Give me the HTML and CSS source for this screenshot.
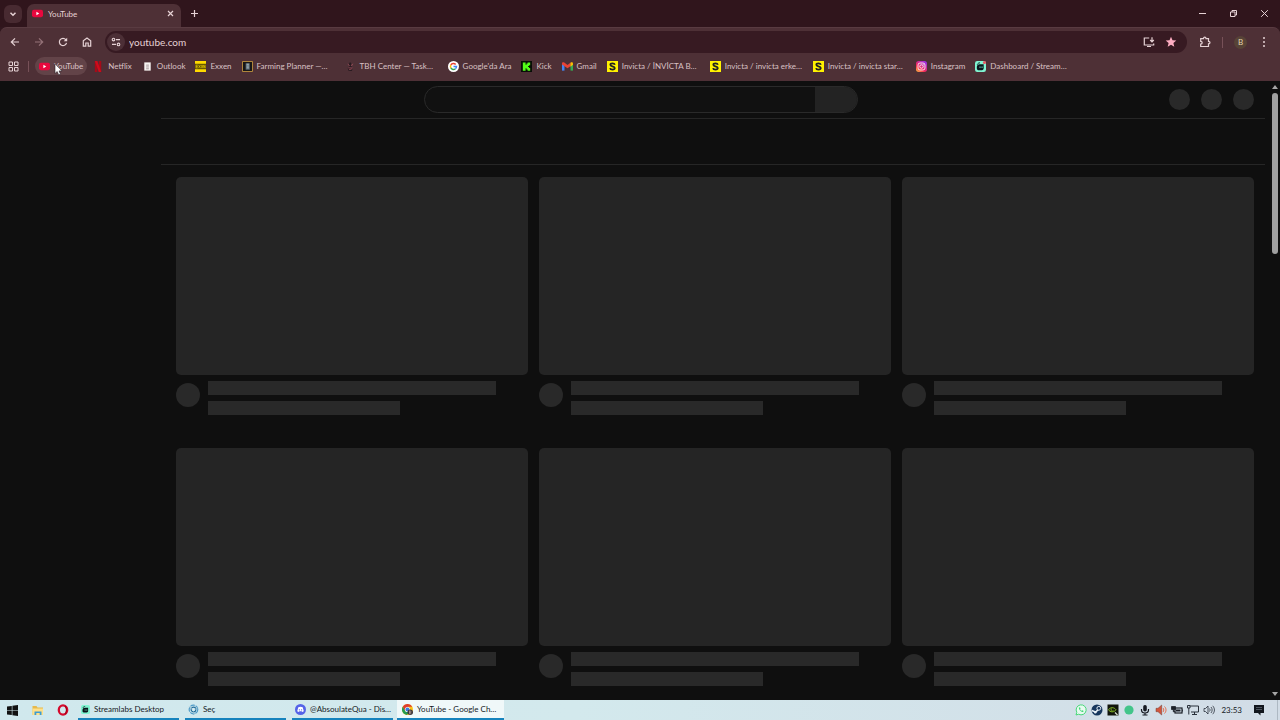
FILE: index.html
```html
<!DOCTYPE html>
<html lang="tr">
<head>
    <meta charset="UTF-8">
    <meta name="viewport" content="width=device-width, initial-scale=1.0">
    <title>YouTube</title>
    <link rel="stylesheet" href="styles.css">
</head>
<body>
    <!-- Shared icons -->
    <svg class="defs" aria-hidden="true">
        <symbol id="yt" viewBox="0 0 12 12">
            <rect x="0" y="2" width="12" height="8" rx="2" fill="#e8083e"/>
            <path d="M4.8 4.2v3.6L7.9 6z" fill="#fff"/>
        </symbol>
        <symbol id="sahibinden" viewBox="0 0 12 12">
            <rect width="12" height="12" fill="#fff200"/>
            <path d="M8.600 4C8.300 2.900 7.300 2.600 6 2.600 4.600 2.600 3.600 3.200 3.600 4.200 3.600 6.300 8.500 5.300 8.500 7.700 8.500 8.900 7.400 9.400 6 9.400 4.500 9.400 3.500 8.900 3.300 7.700" fill="none" stroke="#222" stroke-width="1.900"/>
        </symbol>
        <symbol id="streamlabs" viewBox="0 0 12 12">
            <rect width="12" height="12" rx="2.500" fill="#80f5d2"/>
            <path d="M2 6.500C2 4.500 3.500 3.500 5 3.500h4.500V8c0 1-.7 2-2 2H3.500C2.500 10 2 9 2 8z" fill="#09161d"/>
            <path d="M2.500 4C3 2.500 4 2 5.500 2" fill="none" stroke="#09161d"/>
            <path d="M5.500 6v1.500M7.700 6v1.500" stroke="#80f5d2"/>
        </symbol>
    </svg>

    <header class="browser">
        <div class="tab-strip">
            <button class="tab-search" aria-label="Search tabs">
                <svg width="8" height="8" viewBox="0 0 8 8"><path d="M1.500 2.800 4 5.300l2.500-2.500" fill="none" stroke="currentColor" stroke-width="1.500"/></svg>
            </button>
            <div class="tab">
                <svg width="11" height="11"><use href="#yt"/></svg>
                <span class="tab-title">YouTube</span>
                <button class="tab-close" aria-label="Close tab">
                    <svg width="7" height="7" viewBox="0 0 7 7"><path d="M1 1l5 5M6 1 1 6" stroke="currentColor" stroke-width="1.200"/></svg>
                </button>
            </div>
            <button class="new-tab" aria-label="New tab">
                <svg width="9" height="9" viewBox="0 0 9 9"><path d="M4.500 1v7M1 4.500h7" stroke="currentColor" stroke-width="1.200"/></svg>
            </button>
            <div class="window-controls">
                <button aria-label="Minimize"><svg width="9" height="9" viewBox="0 0 9 9"><path d="M1 4.500h7" stroke="currentColor"/></svg></button>
                <button aria-label="Restore"><svg width="9" height="9" viewBox="0 0 9 9"><path d="M1.500 3h4.500v4.500H1.500zM3 3V1.500h4.500V6H6" fill="none" stroke="currentColor"/></svg></button>
                <button aria-label="Close"><svg width="9" height="9" viewBox="0 0 9 9"><path d="M1.200 1.200l6.600 6.600M7.800 1.200 1.200 7.800" stroke="currentColor"/></svg></button>
            </div>
        </div>

        <div class="toolbar">
            <nav class="nav-buttons">
                <button aria-label="Back"><svg width="12" height="12" viewBox="0 0 12 12"><path d="M10 6H2.500M6 2.300 2.300 6 6 9.700" fill="none" stroke="currentColor" stroke-width="1.200"/></svg></button>
                <button aria-label="Forward" disabled><svg width="12" height="12" viewBox="0 0 12 12"><path d="M2 6h7.500M6 2.300 9.700 6 6 9.700" fill="none" stroke="currentColor" stroke-width="1.200"/></svg></button>
                <button aria-label="Reload"><svg width="12" height="12" viewBox="0 0 12 12"><path d="M9.500 6.800A3.600 3.600 0 1 1 8.800 3.700L9.800 4.700" fill="none" stroke="currentColor" stroke-width="1.200"/><path d="M10.200 1.800v3.500H6.700z" fill="currentColor"/></svg></button>
                <button aria-label="Home"><svg width="12" height="12" viewBox="0 0 12 12"><path d="M2.300 10.200V4.700L6 1.900l3.700 2.800v5.500H7.200V7H4.800v3.200z" fill="none" stroke="currentColor" stroke-width="1.200"/></svg></button>
            </nav>
            <form class="omnibox">
                <button type="button" class="site-info" aria-label="Site information">
                    <svg width="10" height="10" viewBox="0 0 10 10"><g fill="none" stroke="currentColor" stroke-width="1.100"><circle cx="2.500" cy="2.600" r="1.300"/><path d="M5 2.600h4M1 7.400h4"/><circle cx="7.500" cy="7.400" r="1.300"/></g></svg>
                </button>
                <input type="text" class="address" aria-label="Address" value="youtube.com">
                <button type="button" class="omni-action" aria-label="Install app"><svg width="12" height="12" viewBox="0 0 12 12"><path d="M6.200 2H1.300v7h9.400V7.500" fill="none" stroke="currentColor" stroke-width="1.200"/><path d="M4 10.500h4M9 1.300v4.200M7.200 4 9 5.800 10.800 4" fill="none" stroke="currentColor" stroke-width="1.200"/></svg></button>
                <button type="button" class="omni-action star" aria-label="Bookmark this tab"><svg width="12" height="12" viewBox="0 0 12 12"><path d="M6 .8l1.500 3.500 3.800.3-2.900 2.500.9 3.700L6 8.800l-3.300 2 .9-3.700L.7 4.600l3.800-.3z" fill="currentColor"/></svg></button>
            </form>
            <div class="toolbar-actions">
                <button aria-label="Extensions"><svg width="12" height="12" viewBox="0 0 12 12"><path d="M1.700 2.700h2.800c0-2 2.500-2 2.500 0h2.500v2.600c2 0 2 2.500 0 2.500v2.700H1.700V8c2 0 2-2.700 0-2.700z" fill="none" stroke="currentColor" stroke-width="1.200"/></svg></button>
                <span class="divider"></span>
                <button class="profile" aria-label="Profile">B</button>
                <button class="menu" aria-label="Menu"><svg width="4" height="12" viewBox="0 0 4 12"><g fill="currentColor"><circle cx="2" cy="2" r="1"/><circle cx="2" cy="6" r="1"/><circle cx="2" cy="10" r="1"/></g></svg></button>
            </div>
        </div>

        <nav class="bookmarks">
            <button class="apps" aria-label="Apps"><svg width="11" height="11" viewBox="0 0 11 11"><path d="M1 1h3.500v3.500H1zM6.500 1H10v3.500H6.500zM1 6.500h3.500V10H1zM6.500 6.500H10V10H6.500z" fill="none" stroke="currentColor"/></svg></button>
            <span class="divider"></span>
            <a href="#" class="bookmark hovered">
                <svg width="11" height="11"><use href="#yt"/></svg>
                <span>YouTube</span>
                <svg class="cursor" width="9" height="13" viewBox="0 0 9 13"><path d="M1 .8v9.700l2.200-2 1.500 3.400 1.800-.8L5 7.900h3z" fill="#fff" stroke="#292026" stroke-width=".6"/></svg>
            </a>
            <a href="#" class="bookmark"><svg width="11" height="11" viewBox="0 0 12 12"><path d="M2 0h2.700v12H2z" fill="#a60b18"/><path d="M6.300 0H9v12H6.300z" fill="#a60b18"/><path d="M2 0h2.700L9 12H6.300z" fill="#d00b1b"/></svg><span>Netflix</span></a>
            <a href="#" class="bookmark"><svg width="11" height="11" viewBox="0 0 12 12"><path d="M2.500 1.500h7v9h-7z" fill="#f7f3f1"/><path d="M4.500 4.500h3M4.500 6.500h3M4.500 8.500h3" stroke="#8a7b80" stroke-width=".8"/></svg><span>Outlook</span></a>
            <a href="#" class="bookmark"><svg width="11" height="11" viewBox="0 0 12 12"><path d="M0 0h12v12H0z" fill="#ffda00"/><path d="M0 3h12v6H0z" fill="#675800"/><path d="M3 4.500H1.200v3H3M1.200 6H3M4 4.500l2 3M6 4.500l-2 3M7 4.500l1.500 3M8.500 4.500 7 7.500M9.500 7.500v-3l1.500 3v-3" fill="none" stroke="#ffda00" stroke-width=".6"/></svg><span>Exxen</span></a>
            <a href="#" class="bookmark long"><svg width="11" height="11" viewBox="0 0 12 12"><path d="M.5.5h11v11H.5z" fill="#171717" stroke="#c19340"/><path d="M4 2.500h4.500v7H4z" fill="#596974"/><path d="M5 3.500h2.500M5 5.500h2.500M5 7.500h2.500" stroke="#b6c6c9"/></svg><span>Farming Planner —…</span></a>
            <a href="#" class="bookmark long"><svg width="11" height="11" viewBox="0 0 12 12"><path d="M5.500 1l1.500 2-1 2 2.500 2-1 4H4L3 7.500l2-2-1-2z" fill="#291b21"/><path d="M3 3.500 5 5M8.500 3 7 5.500M3.500 7.500h5M4.500 9.500l3-1" stroke="#ad5763" stroke-width=".8"/></svg><span>TBH Center — Task…</span></a>
            <a href="#" class="bookmark"><svg width="11" height="11" viewBox="0 0 12 12"><circle cx="6" cy="6" r="6" fill="#fff"/><g fill="none" stroke-width="1.600"><path d="M8.400 3.700A3.300 3.300 0 0 0 3.100 4.400" stroke="#ea4335"/><path d="M3.100 4.400a3.300 3.300 0 0 0 0 3.200" stroke="#fbbc05"/><path d="M3.100 7.600a3.300 3.300 0 0 0 5 .9" stroke="#34a853"/><path d="M8.100 8.500A3.300 3.300 0 0 0 9.300 6H6" stroke="#4285f4"/></g></svg><span>Google'da Ara</span></a>
            <a href="#" class="bookmark"><svg width="11" height="11" viewBox="0 0 12 12"><path d="M0 0h12v12H0z" fill="#080d07"/><path d="M2 1.500h3v2.500h1V2.800h1.200V1.500H10v3H8.800v1H7.700v1h1.100v1H10v3H7.200V9.200H6V8H5v2.500H2z" fill="#53fc18"/></svg><span>Kick</span></a>
            <a href="#" class="bookmark"><svg width="11" height="11" viewBox="0 0 12 12"><path d="M0 3h2.700v7.500H0z" fill="#4285f4"/><path d="M9.300 3H12v7.500H9.300z" fill="#34a853"/><path d="M0 2.500C0 1.200 1.700 1 2.500 1.700L6 4.400l3.500-2.700v3.700L6 8 0 3.700z" fill="#ea4335"/><path d="M9.300 1.900C10.500.8 12 1.500 12 2.700v1.500L9.300 6.200z" fill="#fbbc04"/></svg><span>Gmail</span></a>
            <a href="#" class="bookmark long"><svg width="11" height="11"><use href="#sahibinden"/></svg><span>Invicta / İNVİCTA B…</span></a>
            <a href="#" class="bookmark long"><svg width="11" height="11"><use href="#sahibinden"/></svg><span>Invicta / invicta erke…</span></a>
            <a href="#" class="bookmark long"><svg width="11" height="11"><use href="#sahibinden"/></svg><span>Invicta / invicta star…</span></a>
            <a href="#" class="bookmark">
                <svg width="11" height="11" viewBox="0 0 12 12">
                    <defs><linearGradient id="insta" x1="0" y1="1" x2=".8" y2="0"><stop offset="0" stop-color="#ffc53d"/><stop offset=".4" stop-color="#f52a59"/><stop offset="1" stop-color="#9b2ee8"/></linearGradient></defs>
                    <rect width="12" height="12" rx="3" fill="url(#insta)"/>
                    <rect x="2.200" y="2.200" width="7.600" height="7.600" rx="2.200" fill="none" stroke="#fff" stroke-width=".9"/>
                    <circle cx="6" cy="6" r="1.900" fill="none" stroke="#fff" stroke-width=".9"/><circle cx="8.300" cy="3.700" r=".5" fill="#fff"/>
                </svg><span>Instagram</span></a>
            <a href="#" class="bookmark"><svg width="11" height="11" viewBox="0 0 12 12"><use href="#streamlabs"/><circle cx="10.300" cy="1.700" r="1.700" fill="#e85662"/></svg><span>Dashboard / Stream…</span></a>
        </nav>
    </header>

    <div class="viewport">
        <div class="page">
            <div class="masthead">
                <form class="search">
                    <input type="text" aria-label="Search">
                    <button type="button" aria-label="Search"></button>
                </form>
                <div class="masthead-icons"><span></span><span></span><span></span></div>
            </div>
            <main class="feed">
                <div class="chips"></div>
                <div class="videos">
                    <div class="video">
                        <div class="thumbnail"></div>
                        <div class="details"><div class="avatar"></div><div class="lines"><div class="line"></div><div class="line short"></div></div></div>
                    </div>
                    <div class="video">
                        <div class="thumbnail"></div>
                        <div class="details"><div class="avatar"></div><div class="lines"><div class="line"></div><div class="line short"></div></div></div>
                    </div>
                    <div class="video">
                        <div class="thumbnail"></div>
                        <div class="details"><div class="avatar"></div><div class="lines"><div class="line"></div><div class="line short"></div></div></div>
                    </div>
                    <div class="video">
                        <div class="thumbnail"></div>
                        <div class="details"><div class="avatar"></div><div class="lines"><div class="line"></div><div class="line short"></div></div></div>
                    </div>
                    <div class="video">
                        <div class="thumbnail"></div>
                        <div class="details"><div class="avatar"></div><div class="lines"><div class="line"></div><div class="line short"></div></div></div>
                    </div>
                    <div class="video">
                        <div class="thumbnail"></div>
                        <div class="details"><div class="avatar"></div><div class="lines"><div class="line"></div><div class="line short"></div></div></div>
                    </div>
                </div>
            </main>
        </div>
        <div class="scrollbar">
            <svg width="6" height="4" viewBox="0 0 6 4"><path d="M0 4h6L3 0z" fill="currentColor"/></svg>
            <div class="track"><div class="thumb"></div></div>
            <svg width="6" height="4" viewBox="0 0 6 4"><path d="M0 0h6L3 4z" fill="currentColor"/></svg>
        </div>
    </div>

    <footer class="taskbar">
        <button class="launcher" aria-label="Start"><svg width="11" height="11" viewBox="0 0 11 11"><path d="M0 1.600 4.800.9v4.300H0zM5.400.8 11 0v5.200H5.400zM0 5.800h4.800v4.300L0 9.400zM5.400 5.800H11V11l-5.600-.8z" fill="#111"/></svg></button>
        <button class="launcher" aria-label="File Explorer"><svg width="12" height="11" viewBox="0 0 12 11"><path d="M.5 1h4l1 1.500h5.500V10H.5z" fill="#e6b94c"/><path d="M.5 3.500H11V10H.5z" fill="#ffe08a"/><path d="M2.500 10V6.500h7V10H7.700V8H4.300v2z" fill="#3c9bd2"/></svg></button>
        <button class="launcher" aria-label="Opera"><svg width="12" height="12" viewBox="0 0 12 12"><ellipse cx="6" cy="6" rx="4.200" ry="4.700" fill="none" stroke="#d50b2d" stroke-width="2.300"/><path d="M8 1.800C10 4 10 8 8 10.200" fill="none" stroke="#a70019" stroke-width="1.200"/></svg></button>
        <button class="task"><svg width="9" height="9"><use href="#streamlabs"/></svg><span>Streamlabs Desktop</span></button>
        <button class="task"><svg width="11" height="11" viewBox="0 0 12 12"><g fill="none"><circle cx="6" cy="6" r="4.700" stroke="#4f9bc8" stroke-width="1.300" stroke-dasharray="5 1"/><circle cx="6" cy="6" r="2.600" stroke="#256e9b" stroke-width="1.200"/><path d="M1 3l4 3M6 12V8M11 4 7 6" stroke="#8cb8ce"/></g><circle cx="6" cy="6" r="1.300" fill="#d7edf3"/></svg><span>Seç</span></button>
        <button class="task"><svg width="11" height="11" viewBox="0 0 12 12"><circle cx="6" cy="6" r="6" fill="#5563e8"/><path d="M3.600 3.500c1.600-.8 3.200-.8 4.800 0L9.600 7.800 7.800 8.700 7.300 8H4.700l-.5.700-1.800-.9z" fill="#fff"/><circle cx="4.800" cy="6.300" r=".7" fill="#5563e8"/><circle cx="7.200" cy="6.300" r=".7" fill="#5563e8"/></svg><span>@AbsoulateQua - Dis…</span></button>
        <button class="task active"><svg width="11" height="11" viewBox="0 0 12 12"><circle cx="6" cy="6" r="6" fill="#fbc116"/><path d="M.8 3A6 6 0 0 1 11.200 3H6L3.400 7.500z" fill="#df3e30"/><path d="M.8 3A6 6 0 0 0 5.500 12L8 7.800H3.600z" fill="#249b50"/><circle cx="6" cy="6" r="2.800" fill="#fff"/><circle cx="6" cy="6" r="2.200" fill="#3f7be0"/><circle cx="9" cy="9" r="3" fill="#40353a"/><path d="M8.200 7.300v3.400M8.200 7.400c2.200-.2 2.200 1.500 0 1.500 2.500 0 2.300 1.800 0 1.700" fill="none" stroke="#cab8a5" stroke-width=".6"/></svg><span>YouTube - Google Ch…</span></button>
        <div class="tray">
            <svg width="12" height="12" viewBox="0 0 12 12"><path d="M1 11l.8-2.700A5 5 0 1 1 3.700 10.200z" fill="#e7faf0" stroke="#47d778"/><path d="M4 3.400c-.8 1.500 1.800 4.500 4 4.600l.7-1-1.400-.8-.7.6C5.800 6.300 5.500 6 5.100 5.200l.5-.6L5 3.300z" fill="#47d778"/></svg>
            <svg width="12" height="12" viewBox="0 0 12 12"><circle cx="6" cy="6" r="5.500" fill="#17375d"/><path d="M.8 6.500 4.500 8l2.800-2.300" fill="none" stroke="#e7f0f7" stroke-width="1.600"/><circle cx="7.800" cy="4.300" r="1.900" fill="#17375d" stroke="#e7f0f7"/><circle cx="4.300" cy="8.200" r="1.200" fill="#e7f0f7"/></svg>
            <svg width="12" height="12" viewBox="0 0 12 12"><path d="M.5.5h11v11H.5z" fill="#11150c"/><path d="M1.500 5.800C3 3.200 7 2.800 9 5.800 7 8.800 3 8.300 1.500 5.800zM5 4.500c-2.400 1.500 0 3.800 1.500 1.800" fill="none" stroke="#82b526"/><path d="M8 8.500l2.500 2.500" stroke="#dbe4d2" stroke-width="1.300"/></svg>
            <svg width="12" height="12" viewBox="0 0 12 12"><circle cx="6" cy="6" r="4.600" fill="#43c58a"/></svg>
            <svg width="12" height="12" viewBox="0 0 12 12"><rect x="4.200" y="1" width="3.600" height="6.500" rx="1.700" fill="#161a22"/><path d="M2.500 5v1c0 4 7 4 7 0V5M6 9v2M3.500 11h5" fill="none" stroke="#161a22" stroke-width="1.200"/></svg>
            <svg width="12" height="12" viewBox="0 0 12 12"><path d="M1 4.300h2L6.700 1v10L3 7.700H1z" fill="#d3563d" stroke="#6e4038" stroke-width=".5"/><path d="M8 4c1 1 1 3 0 4M9.500 2.500c2 2 2 5 0 7" fill="none" stroke="#e46e4f"/></svg>
            <svg width="12" height="12" viewBox="0 0 12 12"><rect x="4" y="4" width="7" height="5" fill="none" stroke="#1b2028" stroke-width="1.200"/><path d="M5 5.500h4.500v2H5z" fill="#1b2028"/><path d="M.5 2.500h4v3h-4zM2.300 5.500v2.300h2M11.500 5.500v2" fill="#1b2028" stroke="#1b2028" stroke-width=".8"/></svg>
            <svg width="12" height="12" viewBox="0 0 12 12"><path d="M3 2h8.500v6H4M7.500 8v2.500M5 10.500h5M.5 1.500h2.500V4H.5zM1.800 4v6.500" fill="none" stroke="#29303a"/></svg>
            <svg width="12" height="12" viewBox="0 0 12 12"><path d="M1 4.500h1.500L5 2v8L2.500 7.500H1zM6.500 4.500c.7 1 .7 2 0 3M8 3c1.500 2 1.500 4 0 6M9.700 1.800c2.300 2.600 2.300 5.800 0 8.400" fill="none" stroke="#29303a" stroke-width=".8"/></svg>
        </div>
        <time class="clock">23:53</time>
        <button class="notifications" aria-label="Notifications"><svg width="12" height="12" viewBox="0 0 12 12"><path d="M1 1h10v8H7.500v2.500L5 9H1z" fill="#12161d"/><path d="M3 3.500h6M3 5.500h6" stroke="#68717b" stroke-width=".7"/></svg></button>
        <span class="show-desktop"></span>
    </footer>
</body>
</html>
```
FILE: styles.css
```css
* { box-sizing: border-box; }

body {
    margin: 0;
    height: 100vh;
    display: flex;
    flex-direction: column;
    overflow: hidden;
    background-color: #0f0f0f;
    color: #e6d2d5;
    font-family: Lato, "Noto Sans", sans-serif;
    font-size: 8px;
    line-height: 12px;
}

button {
    display: flex;
    align-items: center;
    justify-content: center;
    padding: 0;
    border: none;
    background: none;
    color: inherit;
    font: inherit;
}

input {
    min-width: 0;
    padding: 0;
    border: none;
    outline: none;
    background: none;
    color: inherit;
    font: inherit;
}

svg { display: block; flex: none; }
.defs { position: absolute; width: 0; height: 0; }

/* Browser frame */
.browser { background-color: #31171e; }

.tab-strip {
    display: flex;
    align-items: center;
    height: 27px;
    padding-left: 4px;
    background-color: #30151c;
}

.tab-search {
    width: 18px;
    height: 18px;
    border-radius: 6px;
    background-color: #482a31;
}

.tab {
    display: flex;
    align-items: center;
    align-self: flex-end;
    gap: 5px;
    width: 154px;
    height: 23px;
    margin-left: 5px;
    padding: 0 7px 4px 5px;
    border-radius: 7px 7px 0 0;
    background-color: #4e3036;
}

.tab-title { flex: 1; }
.new-tab { width: 27px; height: 20px; }
.window-controls { display: flex; margin-left: auto; }
.window-controls button { width: 31px; height: 26px; }

.toolbar {
    display: flex;
    align-items: center;
    height: 29px;
    padding-left: 3px;
    border-top: 1px solid #593b41;
    border-radius: 7px 7px 0 0;
    background-color: #4e3036;
}

.nav-buttons { display: flex; }
.nav-buttons button { width: 24px; height: 24px; }
.nav-buttons button:disabled { color: #957278; }

.omnibox {
    display: flex;
    align-items: center;
    flex: 1;
    height: 22px;
    margin-left: 6px;
    padding: 0 5px 0 2px;
    border-radius: 11px;
    background-color: #371a22;
}

.site-info {
    width: 18px;
    height: 18px;
    border-radius: 50%;
    background-color: #4c2f36;
}

.address { flex: 1; margin-left: 4px; font-size: 10px; }
.omni-action { width: 22px; height: 20px; }
.star { color: #ffaec3; }

.toolbar-actions {
    display: flex;
    align-items: center;
    gap: 11px;
    padding: 0 14px 0 12px;
}

.divider { width: 1px; height: 11px; background-color: #775158; }

.profile {
    width: 13px;
    height: 13px;
    border-radius: 50%;
    background-color: #574337;
    color: #e5d5ab;
}

.menu { margin-left: 4px; }

.bookmarks {
    display: flex;
    align-items: center;
    gap: 2px;
    height: 25px;
    padding: 0 8px 5px;
    background-color: #4e3036;
}

.bookmarks .divider { margin: 0 4px 0 7px; }

.bookmark {
    position: relative;
    display: flex;
    align-items: center;
    gap: 4px;
    height: 18px;
    padding: 0 4px;
    border-radius: 9px;
    color: #d9c1c5;
    text-decoration: none;
    white-space: nowrap;
}

.hovered { background-color: #624348; }
.long { width: 101px; }
.cursor { position: absolute; left: 19px; top: 6px; }

/* Page */
.viewport { display: flex; flex: 1; min-height: 0; }
.page { flex: 1; min-width: 0; overflow: hidden; }

.masthead {
    display: grid;
    grid-template-columns: 1fr minmax(0, 434px) 1fr;
    align-items: center;
    height: 37px;
    padding: 0 16px 0 28px;
}

.search {
    grid-column: 2;
    display: flex;
    height: 27px;
    border: 1px solid #2a2a2a;
    border-radius: 14px;
    background-color: #111;
    overflow: hidden;
}

.search input { flex: 1; padding: 0 12px; }
.search button { width: 42px; background-color: #232323; }

.masthead-icons { display: flex; justify-content: flex-end; gap: 11px; }
.masthead-icons span { width: 21px; height: 21px; border-radius: 50%; background-color: #292929; }

.feed { margin: 0 5px 0 161px; border-top: 1px solid #262626; }
.chips { height: 46px; border-bottom: 1px solid #262626; }

.videos {
    display: grid;
    grid-template-columns: repeat(3, 1fr);
    gap: 33px 11px;
    padding: 12px 11px 0 15px;
}

.thumbnail { aspect-ratio: 16 / 9; border-radius: 5px; background-color: #252525; }
.details { display: flex; gap: 8px; padding-top: 6px; }
.avatar { width: 24px; height: 24px; margin-top: 2px; border-radius: 50%; background-color: #292929; }
.lines { flex: 1; }
.line { width: 90%; height: 14px; margin-bottom: 6px; background-color: #292929; }
.short { width: 60%; margin-bottom: 0; }

.scrollbar {
    display: flex;
    flex-direction: column;
    align-items: center;
    width: 10px;
    padding: 4px 0;
    color: #a6a6a6;
}

.track { flex: 1; padding: 4px 0; }
.thumb { width: 6px; height: 27%; border-radius: 3px; background-color: #a0a0a0; }

/* Taskbar */
.taskbar {
    display: flex;
    height: 20px;
    padding-right: 2px;
    background: linear-gradient(90deg, #d0e8ed, #d3e9ed 45%, #d2dce6);
    color: #15191e;
}

.launcher { width: 25px; }

.task {
    justify-content: flex-start;
    gap: 4px;
    width: 101px;
    margin-left: 3px;
    margin-right: 3px;
    padding: 0 3px;
    border-bottom: 2px solid #1683bd;
    white-space: nowrap;
}

.active { width: 107px; margin-left: 1px; padding-left: 5px; background-color: #f0f8f9; }
.tray { display: flex; align-items: center; gap: 4px; margin-left: auto; }
.clock { margin: auto 11px auto 6px; }
.show-desktop { width: 1px; margin-left: 12px; background-color: #aeb9c3; }
```
